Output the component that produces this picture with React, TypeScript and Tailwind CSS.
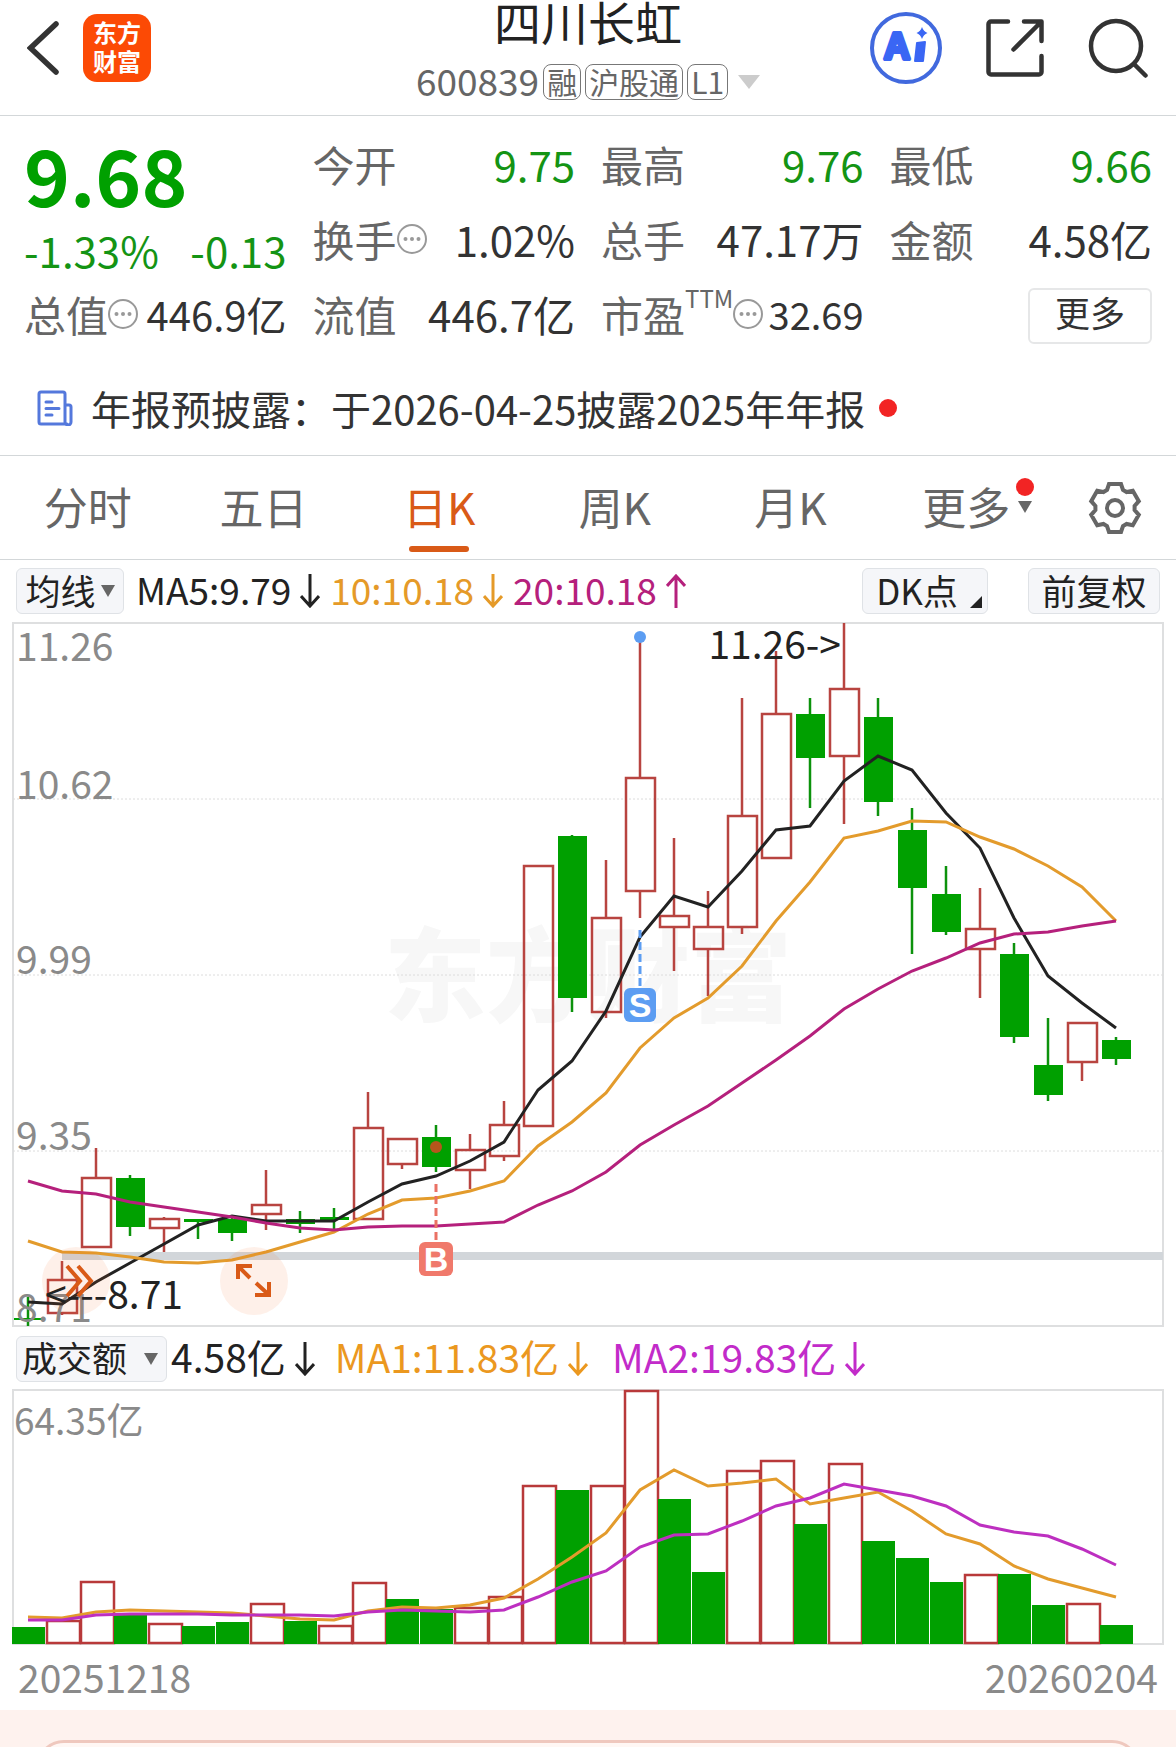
import React from 'react';

type Candle = [up: 0 | 1, high: number, top: number, bottom: number, low: number];

// Candles sit 34 units apart, the first one is centred on x = 28
const candleX = (i: number) => 28 + i * 34;

const candles: Candle[] = [
  [0, 1297, 1318, 1320, 1326],
  [1, 1261, 1280, 1313, 1315],
  [1, 1148, 1178, 1247, 1247],
  [0, 1175, 1178, 1227, 1236],
  [1, 1217, 1219, 1228, 1252],
  [0, 1219, 1219, 1222, 1239],
  [0, 1217, 1219, 1233, 1241],
  [1, 1170, 1205, 1214, 1230],
  [0, 1211, 1219, 1224, 1233],
  [0, 1208, 1217, 1220, 1230],
  [1, 1092, 1128, 1219, 1219],
  [1, 1139, 1139, 1164, 1169],
  [0, 1125, 1137, 1167, 1172],
  [1, 1134, 1150, 1170, 1189],
  [1, 1101, 1125, 1156, 1161],
  [1, 866, 866, 1126, 1126],
  [0, 835, 836, 998, 1012],
  [1, 860, 918, 1012, 1018],
  [1, 637, 778, 891, 918],
  [1, 838, 916, 927, 971],
  [1, 891, 927, 949, 996],
  [1, 698, 816, 927, 934],
  [1, 651, 714, 858, 858],
  [0, 698, 714, 758, 808],
  [1, 623, 689, 756, 824],
  [0, 698, 717, 802, 816],
  [0, 808, 830, 888, 954],
  [0, 866, 894, 932, 935],
  [1, 888, 929, 949, 998],
  [0, 943, 954, 1037, 1043],
  [0, 1018, 1065, 1095, 1101],
  [1, 1023, 1023, 1062, 1081],
  [0, 1037, 1040, 1059, 1065],
];

const ma5 = [
  1302, 1304, 1282, 1263, 1244, 1225, 1216, 1221, 1221, 1221, 1202, 1184, 1176, 1161, 1142, 1090, 1061,
  1011, 937, 896, 907, 871, 830, 826, 781, 756, 770, 813, 848, 918, 976, 1003, 1028,
];
const ma10 = [
  1241, 1252, 1253, 1257, 1262, 1263, 1260, 1252, 1242, 1232, 1214, 1200, 1198, 1191, 1181, 1146, 1122,
  1093, 1048, 1018, 998, 966, 921, 882, 838, 831, 821, 822, 837, 849, 866, 887, 921,
];
const ma20 = [
  1181, 1191, 1194, 1202, 1207, 1212, 1217, 1223, 1228, 1230, 1227, 1226, 1226, 1224, 1222, 1205, 1191,
  1172, 1145, 1125, 1106, 1083, 1060, 1036, 1009, 989, 971, 958, 943, 934, 932, 926, 921,
];

const volumes = [
  1627, 1621, 1582, 1615, 1624, 1626, 1622, 1604, 1621, 1626, 1583, 1599, 1609, 1608, 1597, 1486, 1490,
  1486, 1391, 1499, 1572, 1471, 1461, 1524, 1464, 1541, 1558, 1582, 1575, 1574, 1605, 1604, 1625,
];
const volumeMa1 = [
  1617, 1618, 1612, 1610, 1611, 1612, 1613, 1616, 1619, 1620, 1611, 1607, 1608, 1605, 1598, 1579, 1557,
  1533, 1490, 1470, 1486, 1483, 1479, 1504, 1498, 1492, 1511, 1534, 1544, 1566, 1579, 1588, 1597,
];
const volumeMa2 = [
  1620, 1620, 1615, 1614, 1614, 1614, 1615, 1615, 1615, 1616, 1612, 1610, 1611, 1612, 1610, 1597, 1582,
  1571, 1547, 1535, 1534, 1521, 1506, 1498, 1484, 1490, 1496, 1506, 1525, 1532, 1536, 1549, 1565,
];
const volumeUp = new Set([1, 2, 4, 7, 9, 10, 13, 14, 15, 17, 18, 21, 22, 24, 28, 31]);

const toPoints = (ys: number[]) => ys.map((y, i) => `${candleX(i)},${y}`).join(' ');

const tabs = ['分时', '五日', '日K', '周K', '月K'];

export default function App() {
  return (
    <main className="w-full bg-white font-['Noto_Sans_CJK_SC',sans-serif] text-[#333]">
      <Header />
      <Quote />
      <Notice />
      <PeriodTabs />

      {/* Price chart */}
      <div className="flex h-[62px] items-center px-4 text-[37px] text-[#222]">
        <button className="mr-3 flex h-[46px] w-[108px] items-center justify-center gap-[5px] rounded-md border border-[#dfe2e6] bg-[#f5f6f9] text-[35px] leading-none">
          <span className="pb-1">均线</span>
          <Triangle className="h-3 w-[14px] text-[#666]" />
        </button>
        <Indicator label="MA5:9.79" dir="down" className="mr-[10px]" />
        <Indicator label="10:10.18" dir="down" className="mr-[10px] text-[#e59a28]" />
        <Indicator label="20:10.18" dir="up" className="text-[#b5207c]" />
        <button className="relative ml-auto mr-10 h-[46px] w-[126px] rounded-md border border-[#dfe2e6] bg-[#f5f6f9] pr-4 pb-1 text-[35px] leading-none">
          DK点
          <svg viewBox="0 0 12 12" className="absolute right-[5px] bottom-[5px] h-3 w-3" fill="#222">
            <path d="M12 0v12H0z" />
          </svg>
        </button>
        <button className="h-[46px] w-[132px] rounded-md border border-[#dfe2e6] bg-[#f5f6f9] pb-1 text-[35px] leading-none">
          前复权
        </button>
      </div>
      <PriceChart />

      {/* Turnover chart */}
      <div className="flex h-[61px] items-center px-4 text-[39px] text-[#222]">
        <button className="mr-1 flex h-[46px] w-[151px] items-center justify-between rounded-md border border-[#dfe2e6] bg-[#f5f6f9] pr-2 pl-[5px] text-[35px] leading-none">
          <span className="pb-1">成交额</span>
          <Triangle className="h-3 w-[14px] text-[#666]" />
        </button>
        <Indicator label="4.58亿" dir="down" className="mr-5" />
        <Indicator label="MA1:11.83亿" dir="down" className="mr-6 text-[#eb981f]" />
        <Indicator label="MA2:19.83亿" dir="down" className="text-[#c22bc9]" />
      </div>
      <VolumeChart />

      <div className="flex h-16 items-center justify-between px-[18px] pb-1 text-[39px] leading-none text-[#8a8a8a]">
        <span>20251218</span>
        <span>20260204</span>
      </div>

      <div className="h-[37px] overflow-hidden bg-[#fef2ee] px-9 pt-[30px]">
        <div className="h-20 rounded-[28px] border-[3px] border-[#efc8be] bg-[#fff7f4]" />
      </div>
    </main>
  );
}

function Header() {
  return (
    <header className="grid h-[116px] grid-cols-[1fr_auto_1fr] border-b border-[#d3d7d9]">
      <div className="flex h-24 items-center gap-6 pl-[27px]">
        <button aria-label="返回">
          <svg viewBox="0 0 32 54" className="h-[54px] w-8" fill="none" stroke="#333" strokeWidth="5.5" strokeLinecap="round">
            <path d="M29 3 3.500 27 29 51" />
          </svg>
        </button>
        <a
          href="#home"
          className="flex h-[68px] w-[68px] flex-col items-center justify-center rounded-[14px] bg-[#fc4a05] pb-1 text-2xl leading-[29px] font-bold text-white"
        >
          <span>东方</span>
          <span>财富</span>
        </a>
      </div>

      <div className="flex flex-col items-center">
        <h1 className="text-[47px] leading-[42px] text-[#222]">四川长虹</h1>
        <button className="mt-4 flex h-12 items-center gap-1 text-[#666]">
          <span className="pb-1 text-[37px] leading-none">600839</span>
          <Tag>融</Tag>
          <Tag>沪股通</Tag>
          <Tag>L1</Tag>
          <Triangle className="ml-[6px] h-[14px] w-[22px] text-[#ccc]" />
        </button>
      </div>

      <div className="flex h-24 items-center justify-end gap-11 pr-7">
        <button aria-label="AI">
          <svg viewBox="0 0 72 74" className="h-[74px] w-[72px]">
            <circle cx="36" cy="37" r="34" fill="none" stroke="#4169de" strokeWidth="4" />
            <text
              x="14"
              y="48"
              fill="#3a66f4"
              stroke="#3a66f4"
              strokeWidth="4"
              strokeLinejoin="round"
              className="font-['Liberation_Sans',sans-serif] text-[36px] font-bold"
            >
              A
            </text>
            <path d="m47 32 8-1-2 19h-8z" fill="#3a66f4" stroke="#3a66f4" strokeWidth="2" strokeLinejoin="round" />
            <path d="M52 16q1.500 4.500 5.500 6-4 1.500-5.500 6-1.500-4.500-5.500-6 4-1.500 5.500-6z" fill="#3a66f4" />
          </svg>
        </button>
        <button aria-label="分享">
          <svg viewBox="0 0 58 58" className="h-[58px] w-[58px]" fill="none" stroke="#333" strokeWidth="4.500" strokeLinecap="round" strokeLinejoin="round">
            <path d="M22 2.500H5A2.500 2.500 0 0 0 2.500 5v48A2.500 2.500 0 0 0 5 55.500h48a2.500 2.500 0 0 0 2.500-2.500V37" />
            <path d="M38 2.500h17.500V22M55 3 27.500 30.500" />
          </svg>
        </button>
        <button aria-label="搜索">
          <svg viewBox="0 0 60 60" className="h-[60px] w-[60px]" fill="none" stroke="#333" strokeWidth="4.500" strokeLinecap="round">
            <circle cx="28" cy="28" r="25" />
            <path d="m46.500 46.500 11 11" />
          </svg>
        </button>
      </div>
    </header>
  );
}

function Tag({ children }: { children: React.ReactNode }) {
  return (
    <span className="flex h-9 items-center rounded-lg border border-[#777] px-[3px] pb-[2px] text-[30px] leading-none">
      {children}
    </span>
  );
}

function Quote() {
  return (
    <section className="grid grid-cols-4 grid-rows-[75px_75px_75px] gap-x-[26px] px-6 pt-3 text-[42px] leading-none">
      <div className="row-span-2 flex flex-col text-[#149414]">
        <strong className="flex h-[90px] items-center text-[78px] font-bold text-[#00a000]">9.68</strong>
        <div className="flex h-[60px] items-center justify-between pt-1">
          <span>-1.33%</span>
          <span>-0.13</span>
        </div>
      </div>
      <Stat label="今开" value="9.75" valueClass="text-[#149414]" />
      <Stat label="最高" value="9.76" valueClass="text-[#149414]" />
      <Stat label="最低" value="9.66" valueClass="text-[#149414]" />
      <Stat label="换手" value="1.02%" info />
      <Stat label="总手" value="47.17万" />
      <Stat label="金额" value="4.58亿" />
      <Stat label="总值" value="446.9亿" info valueClass="text-[40px]" />
      <Stat label="流值" value="446.7亿" />
      <Stat label="市盈" sup="TTM" value="32.69" info valueClass="text-[38px]" />
      <div className="flex items-center justify-end">
        <button className="h-14 w-[124px] rounded-md border-2 border-[#e6e7e8] pb-2 text-[35px] leading-none">
          更多
        </button>
      </div>
    </section>
  );
}

type StatProps = {
  label: string;
  value: string;
  info?: boolean;
  sup?: string;
  valueClass?: string;
};

function Stat({ label, value, info, sup, valueClass = '' }: StatProps) {
  return (
    <div className="flex items-center justify-between pb-1 whitespace-nowrap">
      <span className="flex items-center text-[#666]">
        {label}
        {sup && <sup className="mb-2 text-2xl leading-none">{sup}</sup>}
        {info && <InfoIcon />}
      </span>
      <span className={valueClass}>{value}</span>
    </div>
  );
}

function InfoIcon() {
  return (
    <svg viewBox="0 0 30 30" className="h-[30px] w-[30px]" fill="#999">
      <circle cx="15" cy="15" r="14" fill="none" stroke="#999" strokeWidth="2" />
      <circle cx="8.500" cy="15" r="2" />
      <circle cx="15" cy="15" r="2" />
      <circle cx="21.500" cy="15" r="2" />
    </svg>
  );
}

function Notice() {
  return (
    <a
      href="#notice"
      className="flex h-[103px] items-center border-b border-[#d3d7d9] pt-2 pl-[37px] text-[40px] leading-none"
    >
      <svg viewBox="0 0 36 36" className="mr-[18px] h-9 w-9" fill="none" stroke="#5478dc" strokeWidth="3" strokeLinecap="round" strokeLinejoin="round">
        <path d="M30 34H4a2 2 0 0 1-2-2V4a2 2 0 0 1 2-2h22a2 2 0 0 1 2 2v28a2 2 0 0 0 6 0V17a2 2 0 0 0-2-2h-4" />
        <path d="M9 12h6M9 18.500h13M9 25h6" />
      </svg>
      年报预披露：于2026-04-25披露2025年年报
      <span className="ml-[14px] h-[18px] w-[18px] rounded-full bg-[#f22424]" />
    </a>
  );
}

function PeriodTabs() {
  return (
    <nav className="flex h-[104px] border-b border-[#d3d7d9] text-[44px] leading-none text-[#666]">
      {tabs.map((tab) => {
        const active = tab === '日K';
        return (
          <button key={tab} className={`relative flex-1 pb-1 ${active ? 'text-[#d95a17]' : ''}`}>
            {tab}
            {active && (
              <span className="absolute bottom-[7px] left-1/2 h-[6px] w-[60px] -translate-x-1/2 rounded-full bg-[#d95a17]" />
            )}
          </button>
        );
      })}
      <button className="relative flex-1 pb-1">
        更多
        <span className="absolute top-[22px] right-5 h-[18px] w-[18px] rounded-full bg-[#f22424]" />
        <Triangle className="absolute top-[45px] right-[22px] h-3 w-[14px]" />
      </button>
      <button aria-label="设置" className="flex w-[122px] items-center justify-center">
        <Gear />
      </button>
    </nav>
  );
}

function Gear() {
  // Six teeth, each given by its two base and two tip corners
  const tooth = [
    [-8, -18],
    [-6, -24],
    [6, -24],
    [8, -18],
  ];
  const points = Array.from({ length: 6 }, (_, i) => {
    const a = (i * Math.PI) / 3;
    return tooth
      .map(([x, y]) => `${x * Math.cos(a) - y * Math.sin(a)},${x * Math.sin(a) + y * Math.cos(a)}`)
      .join(' ');
  }).join(' ');

  return (
    <svg viewBox="-27 -27 54 54" className="h-[54px] w-[54px]" fill="none" stroke="#666" strokeWidth="4">
      <polygon points={points} />
      <circle r="8" />
    </svg>
  );
}

function Triangle({ className }: { className: string }) {
  return (
    <svg viewBox="0 0 14 12" preserveAspectRatio="none" className={className} fill="currentColor">
      <path d="M0 0h14L7 12z" />
    </svg>
  );
}

type IndicatorProps = { label: string; dir: 'up' | 'down'; className?: string };

function Indicator({ label, dir, className = '' }: IndicatorProps) {
  return (
    <span className={`flex items-center gap-[9px] leading-none whitespace-nowrap ${className}`}>
      <span className="pb-1">{label}</span>
      <svg viewBox="0 0 20 34" className="h-[34px] w-5" fill="none" stroke="currentColor" strokeWidth="3">
        <path d={dir === 'down' ? 'M10 0v31M1 22l9 10 9-10' : 'M10 34V3M1 12l9-10 9 10'} />
      </svg>
    </span>
  );
}

function PriceChart() {
  return (
    <div className="px-3">
      <svg viewBox="12 622 1152 706" className="block w-full" fill="none">
        <text x="384" y="1014" fill="#f7f7f7" className="text-[102px] font-black">
          东方财富
        </text>
        <rect x="13" y="623" width="1150" height="703" stroke="#dedfe0" strokeWidth="2" />
        {[799, 975, 1151].map((y) => (
          <path key={y} d={`M13 ${y}H1163`} stroke="#dcdcdc" strokeDasharray="2 2" />
        ))}
        <path d="M62 1256H1163" stroke="#d2d6da" strokeWidth="8" />

        {candles.map(([up, high, top, bottom, low], i) => {
          const x = candleX(i);
          return up ? (
            <g key={i} stroke="#b84440" strokeWidth="2.500">
              <path d={`M${x} ${high}V${top}M${x} ${bottom}V${low}`} />
              <rect x={x - 14} y={top} width="29" height={bottom - top} />
            </g>
          ) : (
            <g key={i} fill="#00a000">
              <path d={`M${x} ${high}V${low}`} stroke="#0c920c" strokeWidth="2.500" />
              <rect x={x - 14} y={top} width="29" height={bottom - top} />
            </g>
          );
        })}

        {/* Price scale */}
        <g fill="#8a8a8a" className="text-[39px]">
          <text x="16" y="661">11.26</text>
          <text x="16" y="799">10.62</text>
          <text x="16" y="974">9.99</text>
          <text x="16" y="1150">9.35</text>
          <text x="16" y="1322">8.71</text>
        </g>

        <g strokeWidth="3">
          <polyline points={toPoints(ma5)} stroke="#222" />
          <polyline points={toPoints(ma10)} stroke="#e39b2c" />
          <polyline points={toPoints(ma20)} stroke="#b5207c" />
        </g>

        {/* Sell and buy marks */}
        <circle cx="640" cy="637" r="6" fill="#5c9df2" />
        <path d="M640 930V988" stroke="#5c9df2" strokeWidth="3" strokeDasharray="8 4" />
        <rect x="624" y="988" width="32" height="34" rx="6" fill="#5c9df2" />
        <circle cx="436" cy="1147" r="6" fill="#b5561c" />
        <path d="M436 1184V1242" stroke="#ea7164" strokeWidth="3" strokeDasharray="8 4" />
        <rect x="419" y="1242" width="34" height="34" rx="6" fill="#f0796b" />
        <g fill="#fff" textAnchor="middle" className="font-['Liberation_Sans',sans-serif] text-[34px] font-bold">
          <text x="640" y="1017">S</text>
          <text x="436" y="1271">B</text>
        </g>

        {/* Chart tools */}
        <g fill="#f26a2a" fillOpacity="0.1">
          <circle cx="76" cy="1281" r="34" />
          <circle cx="254" cy="1281" r="34" />
        </g>
        <g stroke="#d95a17" strokeWidth="4">
          <path d="m67 1266 13 15-13 15M78 1266l13 15-13 15" />
          <path d="M252 1266h-14v13M239 1267l11 11M255 1295h14v-13M268 1294l-12-11" />
        </g>

        <g fill="#222" className="text-[39px]">
          <text x="841" y="659" textAnchor="end">11.26-&gt;</text>
          <text x="183" y="1309" textAnchor="end">&lt;---8.71</text>
        </g>
      </svg>
    </div>
  );
}

function VolumeChart() {
  return (
    <div className="px-3">
      <svg viewBox="12 1389 1152 257" className="block w-full" fill="none">
        <rect x="13" y="1390" width="1150" height="254" stroke="#dedfe0" strokeWidth="2" />
        {volumes.map((y, i) => {
          const x = candleX(i) - 16;
          return volumeUp.has(i) ? (
            <rect key={i} x={x + 1} y={y} width="33" height={1643 - y} stroke="#b8393a" strokeWidth="2.500" />
          ) : (
            <rect key={i} x={x} y={y} width="33" height={1644 - y} fill="#00a000" />
          );
        })}
        <polyline points={toPoints(volumeMa1)} stroke="#e39b2c" strokeWidth="3" />
        <polyline points={toPoints(volumeMa2)} stroke="#bd2fc0" strokeWidth="3" />
        <text x="14" y="1435" fill="#8a8a8a" className="text-[37px]">64.35亿</text>
      </svg>
    </div>
  );
}
